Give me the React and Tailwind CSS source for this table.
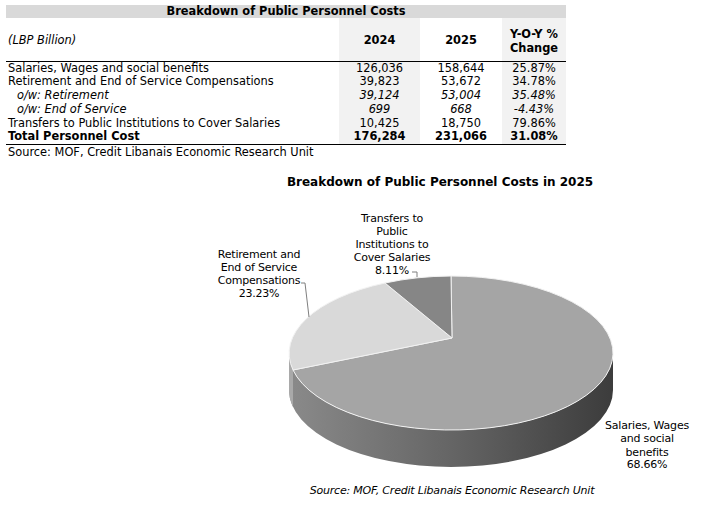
const rows = [
  { label: 'Salaries, Wages and social benefits', a: '126,036', b: '158,644', c: '25.87%' },
  { label: 'Retirement and End of Service Compensations', a: '39,823', b: '53,672', c: '34.78%' },
  { label: 'o/w: Retirement', a: '39,124', b: '53,004', c: '35.48%', sub: true },
  { label: 'o/w: End of Service', a: '699', b: '668', c: '-4.43%', sub: true },
  { label: 'Transfers to Public Institutions to Cover Salaries', a: '10,425', b: '18,750', c: '79.86%' },
  { label: 'Total Personnel Cost', a: '176,284', b: '231,066', c: '31.08%', total: true },
];

const CostTable = () => (
  <div className="h-[160px] pt-[5px]">
    <table className="ml-[6px] w-[560px] border-collapse table-fixed text-[11.4px] text-black">
      <colgroup>
        <col className="w-[333px]" />
        <col className="w-[81px]" />
        <col className="w-[82px]" />
        <col className="w-[64px]" />
      </colgroup>
      <tbody>
        <tr>
          <td colSpan={4} className="h-[13px] bg-[#d9d9d9] p-0 text-center font-bold leading-[13px]">
            Breakdown of Public Personnel Costs
          </td>
        </tr>
        <tr>
          <td className="h-[43px] border-b border-black p-0 pl-[2px] pt-[3px] italic">(LBP Billion)</td>
          <td className="h-[43px] border-b border-black bg-[#f2f2f2] p-0 pt-[3px] text-center font-bold">2024</td>
          <td className="h-[43px] border-b border-black p-0 pt-[3px] text-center font-bold">2025</td>
          <td className="h-[43px] border-b border-black bg-[#f2f2f2] p-0 pt-[3px] text-center font-bold leading-[14px]">
            Y-O-Y %<br />Change
          </td>
        </tr>
        {rows.map((r, i) => {
          const last = i === rows.length - 1 ? 'border-b border-black' : '';
          return (
            <tr key={r.label} className={`${r.sub ? 'italic' : ''} ${r.total ? 'font-bold' : ''}`}>
              <td className={`h-[13.75px] p-0 leading-[13.75px] whitespace-nowrap ${r.sub ? 'pl-[11px]' : 'pl-[2px]'} ${last}`}>
                {r.label}
              </td>
              <td className={`h-[13.75px] bg-[#f2f2f2] p-0 text-center leading-[13.75px] ${last}`}>{r.a}</td>
              <td className={`h-[13.75px] p-0 text-center leading-[13.75px] ${last}`}>{r.b}</td>
              <td className={`h-[13.75px] bg-[#f2f2f2] p-0 text-center leading-[13.75px] ${last}`}>{r.c}</td>
            </tr>
          );
        })}
      </tbody>
    </table>
    <p className="ml-[8px] text-[11.4px] leading-[14px] text-black">
      Source: MOF, Credit Libanais Economic Research Unit
    </p>
  </div>
);

const PieChart = () => {
  // top ellipse: centre 451,353 rx 162 ry 77; wedge vertex sits a bit higher
  const V = '452 338';
  return (
    <svg width="701" height="346" viewBox="0 160 701 346" className="block">
      <defs>
        <linearGradient id="side" x1="0" x2="1" y1="0" y2="0">
          <stop offset="0" stopColor="#8a8a8a" />
          <stop offset="0.5" stopColor="#656565" />
          <stop offset="1" stopColor="#3c3c3c" />
        </linearGradient>
      </defs>
      <text x="440" y="186" textAnchor="middle" fontSize="12" fontWeight="bold" fill="#000">
        Breakdown of Public Personnel Costs in 2025
      </text>

      {/* side band */}
      <path d="M289 353 A162 77 0 0 0 613 353 L613 390 A162 77 0 0 1 289 390 Z" fill="url(#side)" />
      <path d="M289 353 A162 77 0 0 0 293 370 L293 407 A162 77 0 0 1 289 390 Z" fill="#a9a9a9" />

      {/* top wedges */}
      <path d={`M${V} L451 276 A162 77 0 1 1 293 370 Z`} fill="#a5a5a5" stroke="#f2f2f2" strokeWidth="1" />
      <path d={`M${V} L293 370 A162 77 0 0 1 385 283 Z`} fill="#d9d9d9" stroke="#f2f2f2" strokeWidth="1" />
      <path d={`M${V} L385 283 A162 77 0 0 1 451 276 Z`} fill="#868686" stroke="#f2f2f2" strokeWidth="1" />

      {/* leader lines */}
      <polyline points="301,283 305,283 309,317" fill="none" stroke="#7f7f7f" strokeWidth="1" />
      <polyline points="412,272 417,272 417,277" fill="none" stroke="#7f7f7f" strokeWidth="1" />

      <g fontSize="11" fill="#000" textAnchor="middle" letterSpacing="-0.2">
        <text x="392" y="222">Transfers to</text>
        <text x="392" y="235">Public</text>
        <text x="392" y="248">Institutions to</text>
        <text x="392" y="261">Cover Salaries</text>
        <text x="392" y="274">8.11%</text>

        <text x="259" y="258">Retirement and</text>
        <text x="259" y="271">End of Service</text>
        <text x="259" y="284">Compensations</text>
        <text x="259" y="297">23.23%</text>

        <text x="647" y="429">Salaries, Wages</text>
        <text x="647" y="442">and social</text>
        <text x="647" y="456">benefits</text>
        <text x="647" y="468">68.66%</text>

        <text x="452" y="494" fontStyle="italic">
          Source: MOF, Credit Libanais Economic Research Unit
        </text>
      </g>
    </svg>
  );
};

export default function App() {
  return (
    <div className="h-[506px] w-[701px] overflow-hidden bg-white font-['DejaVu_Sans',Verdana,sans-serif]">
      <CostTable />
      <PieChart />
    </div>
  );
}
